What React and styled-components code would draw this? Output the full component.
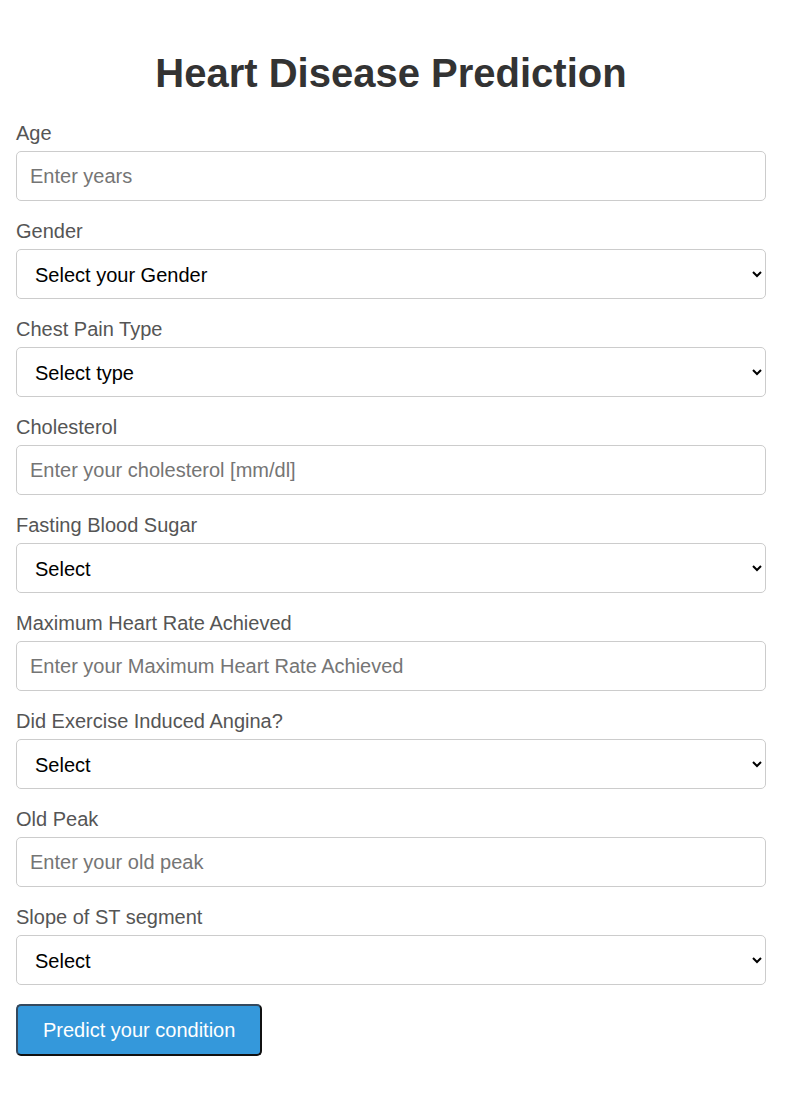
import React from "react";
import styled, { createGlobalStyle } from "styled-components";

const GlobalStyle = createGlobalStyle`
  html, body {
    margin: 0;
    padding: 0;
    background: #ffffff;
  }
  body {
    font-family: "Liberation Sans", Arial, sans-serif;
  }
  * { box-sizing: border-box; }
`;

const Page = styled.div`
  padding: 23px 20px 40px 16px;
`;

const Title = styled.h1`
  margin: 27px 0 26px;
  text-align: center;
  font-size: 40px;
  font-weight: 700;
  line-height: 46px;
  color: #333333;
`;

const Form = styled.form`
  display: flex;
  flex-direction: column;
`;

const Group = styled.div`
  display: flex;
  flex-direction: column;
  margin-bottom: 19px;
`;

const Label = styled.label`
  font-size: 20px;
  line-height: 23px;
  color: #555555;
  margin-bottom: 6px;
`;

const fieldCss = `
  width: 100%;
  height: 50px;
  border: 1px solid #cccccc;
  border-radius: 5px;
  font-family: "Liberation Sans", Arial, sans-serif;
  font-size: 20px;
  background: #ffffff;
  color: #000000;
  outline: none;
`;

const Input = styled.input`
  ${fieldCss}
  padding: 0 12px 0 13px;
  &::placeholder {
    color: #757575;
  }
`;

const Select = styled.select`
  ${fieldCss}
  padding: 1px 8px 0 14px;
`;

const Button = styled.button`
  align-self: flex-start;
  height: 52px;
  padding: 0 25px;
  background: #3498db;
  color: #ffffff;
  font-family: "Liberation Sans", Arial, sans-serif;
  font-size: 20px;
  border: 2px solid;
  border-color: #34495e #111111 #111111 #34495e;
  border-radius: 5px;
  cursor: pointer;
`;

const fields = [
  { label: "Age", type: "input", placeholder: "Enter years" },
  { label: "Gender", type: "select", placeholder: "Select your Gender" },
  { label: "Chest Pain Type", type: "select", placeholder: "Select type" },
  { label: "Cholesterol", type: "input", placeholder: "Enter your cholesterol [mm/dl]" },
  { label: "Fasting Blood Sugar", type: "select", placeholder: "Select" },
  { label: "Maximum Heart Rate Achieved", type: "input", placeholder: "Enter your Maximum Heart Rate Achieved" },
  { label: "Did Exercise Induced Angina?", type: "select", placeholder: "Select" },
  { label: "Old Peak", type: "input", placeholder: "Enter your old peak" },
  { label: "Slope of ST segment", type: "select", placeholder: "Select" },
];

export default function App() {
  return (
    <>
      <GlobalStyle />
      <Page>
        <Title>Heart Disease Prediction</Title>
        <Form onSubmit={(e) => e.preventDefault()}>
          {fields.map((f, i) => (
            <Group key={i}>
              <Label htmlFor={`f${i}`}>{f.label}</Label>
              {f.type === "input" ? (
                <Input id={`f${i}`} type="text" placeholder={f.placeholder} />
              ) : (
                <Select id={`f${i}`} defaultValue="">
                  <option value="">{f.placeholder}</option>
                </Select>
              )}
            </Group>
          ))}
          <Button type="submit">Predict your condition</Button>
        </Form>
      </Page>
    </>
  );
}
